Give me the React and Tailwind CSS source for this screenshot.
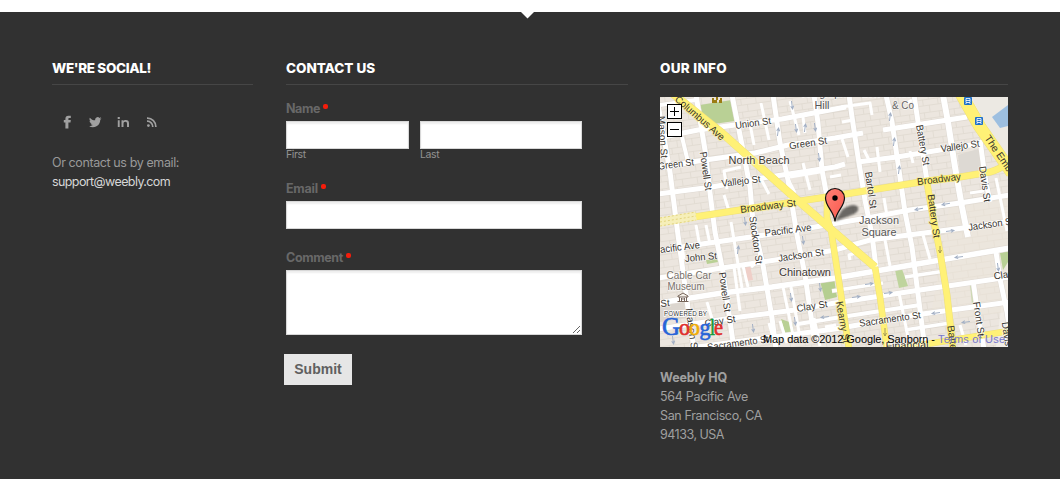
import React from "react";

const streets = [
  // east-west streets
  ["M-2 41 38 33 75 28 122 22 175 12 186 10", 5],
  ["M223 33 262 27 307 20", 5],
  ["M-2 71 38 64 95 56 128 48 175 41 203 36", 5],
  ["M-2 97 52 90 102 81 175 70 185 67", 5],
  ["M198 65 237 60 280 53 322 46", 5],
  ["M-2 154 28 149 105 138 155 130 207 121 250 113 300 106 350 98", 5],
  ["M-2 181 62 171 122 162 175 153 210 143 303 131 350 124", 5],
  ["M-2 206 62 196 112 190 175 181 257 167 350 151", 5.5],
  ["M-2 232 72 221 135 213 175 206 260 193 350 180", 5],
  ["M30 251 105 241 175 232 255 218 350 205", 5],
  ["M138 227 175 221 260 208", 4],
  ["M172 194 223 186", 3.5],
  ["M245 180 285 174", 3.5],
  ["M245 233 290 226", 3.5],
  ["M0 8 36 3", 4],
  // north-south streets
  ["M-2 8 3 35 10 75 18 138 28 211 34 252", 5],
  ["M22 40 28 65", 4],
  ["M36 -2 45 53 50 96 55 135 63 175 74 252", 5],
  ["M72 -2 83 53 90 90 93 125 103 168 112 221 116 252", 5],
  ["M113 -2 120 46 128 83 137 138 145 178 154 240", 5],
  ["M154 -2 158 26 162 73 167 100", 5],
  ["M189 -2 192 20 198 60 205 103 212 138 216 170", 5],
  ["M226 -2 232 25 240 80 245 115 252 150 265 252", 5],
  ["M254 -2 260 38 267 84", 5],
  ["M283 -2 288 25 295 70 302 110 308 140", 6],
  ["M320 43 325 80 330 105", 5],
  ["M313 183 318 218 324 252", 5],
  ["M336 155 340 182 347 215 350 237", 5],
  ["M310 96 324 94", 3],
];

const alleys = [
  "M90 27 94 48", "M101 6 109 43", "M130 4 139 38", "M143 20 145 36",
  "M64 98 69 114 M67 92 64 74 81 70", "M101 82 109 97",
  "M128 82 135 96", "M143 66 150 93", "M130 80 160 75", "M36 128 40 150 M46 128 50 147",
  "M71 125 82 191", "M74 170 80 214", "M83 169 88 190", "M91 170 98 164",
  "M123 190 133 238", "M131 190 139 235", "M109 226 115 247", "M120 224 127 246",
  "M47 205 53 225", "M22 149 24 162", "M181 10 210 6 212 18 M182 25 193 23",
  "M182 42 188 60", "M204 53 210 65 M217 50 220 75", "M250 54 253 66",
  "M224 101 227 119", "M225 143 230 169", "M263 138 270 162",
  "M239 196 248 240", "M190 163 189 158 196 156", "M170 80 181 78", "M247 6 252 3",
  "M154 221 160 249", "M165 230 176 228", "M300 228 306 248", "M320 20 324 36", "M336 81 347 134",
];

const arrows = [
  [132, 8, 82], [118, 35, -82], [136, 31, 82], [145, 31, -82], [155, 30, 82], [159, 60, 82],
  [230, 20, -82], [234, 45, -82], [239, 73, -82], [259, 112, 170], [286, 107, 170],
  [143, 143, 82], [78, 153, -82], [131, 200, 82], [160, 190, 82], [93, 231, 82], [135, 224, 82],
  [290, 134, -8], [299, 160, 172], [209, 187, -8], [196, 200, -8], [228, 196, -8],
  [276, 216, 172], [306, 225, 172], [225, 235, 82], [338, 170, 82], [85, 124, 82], [13, 243, 82], [165, 220, 172],
];

// text, centre x, centre y, rotation, width, on a yellow road
const labels = [
  ["Union St", 93, 26, -8, 36],
  ["Green St", 148, 46, -9, 38],
  ["Green St", 16, 67, -7, 36],
  ["Vallejo St", 81, 84, -7, 39],
  ["Vallejo St", 300, 49, -8, 39],
  ["Powell St", 46, 74, 82, 39],
  ["Mason St", 3, 40, 86, 42],
  ["Bartol St", 211, 93, 82, 37],
  ["Battery St", 263, 48, 80, 41],
  ["Davis St", 325, 87, 82, 36],
  ["Pacific Ave", 128, 133, -7, 47],
  ["acific Ave", 20, 150, -7, 40],
  ["John St", 41, 160, -5, 32],
  ["Jackson St", 141, 158, -8, 46],
  ["Jackson St", 331, 127, -8, 46],
  ["Stockton St", 96, 143, 82, 48],
  ["Powell St", 65, 195, 82, 40],
  ["Clay St", 152, 209, -9, 31],
  ["Clay St", 60, 224, -9, 31],
  ["Clay St", 349, 177, -8, 31],
  ["St", 5, 206, -5, 9],
  ["Mason St", 32, 233, 82, 44],
  ["Sacramento St", 230, 222, -8, 62],
  ["Sacramento St", 78, 246, -8, 62],
  ["Front St", 319, 222, 82, 35],
  ["Davis", 347, 237, 82, 24],
  ["Columbus Ave", 40, 21, 41, 62, true],
  ["Broadway St", 108, 109, -7, 56, true],
  ["Broadway", 279, 82, -7, 44, true],
  ["Battery St", 274, 119, 82, 44, true],
  ["Kearny St", 183, 225, 80, 42, true],
  ["Battery", 293, 245, 82, 34, true],
  ["The Embarcadero", 350, 73, 56, 82, true],
  ["Financial", 247, 248, -2, 43],
];

const places = [
  ["North Beach", 99, 67, 61, "#3e3833"],
  ["Chinatown", 145, 179, 52, "#3e3833"],
  ["Jackson", 219, 127, 40, "#555"],
  ["Square", 219, 139, 35, "#555"],
  ["Hill", 162, 12, 15, "#555"],
  ["Telegraph", 163, 0, 46, "#555"],
  ["Levi Strauss", 229, 0, 54, "#777"],
  ["& Co", 243, 12, 22, "#666"],
  ["Cable Car", 29, 182, 45, "#77706a"],
  ["Museum", 26, 193, 37, "#77706a"],
];

const avenues = [
  ["M34 120 173 99 267 84 300 80 330 75Q341 72 350 64", 6.5],
  ["M167 100 167 121 171 133 180 191 189 252", 6],
  ["M267 86 273 120 280 155 287 198 293 252", 6.3],
  ["M215 170 220 200 227 252M235 252 343 235 350 234", 6],
  ["M12 -4 62 36 135 101 173 134 215 170", 7.5],
  ["M300 -5 320 30 352 76", 12],
];

function CityMap() {
  return (
    <svg className="block h-[250px] w-[348px]" viewBox="0 0 348 250" fontFamily="'Liberation Sans', Arial, sans-serif">
      <defs>
        <pattern id="lots" width="15" height="13" patternUnits="userSpaceOnUse" patternTransform="rotate(-8)">
          <rect width="15" height="13" fill="#ece6df" />
          <path d="M0 .5H15M4.500 0V6M10.500 6V13M0 6.500H15" stroke="#e0d9d1" strokeWidth=".8" fill="none" />
        </pattern>
        <linearGradient id="pin" x1="0" y1="0" x2="1" y2="1">
          <stop offset="0" stopColor="#ff8175" />
          <stop offset="1" stopColor="#f9584d" />
        </linearGradient>
        <filter id="soft" x="-30%" y="-30%" width="160%" height="160%">
          <feGaussianBlur stdDeviation="1.3" />
        </filter>
      </defs>
      <rect width="348" height="250" fill="#f1ede7" />
      <path d="M0 0H300L348 70V158L336 250H0Z" fill="url(#lots)" />
      <path d="M290 105 348 96V215L270 225Z" fill="#ece6da" opacity=".55" />
      <path d="M298 58 318 52 327 75 300 79Z" fill="#ddd9d3" />
      <path d="M0 209 25 205 28 221 0 225Z" fill="#dcd6cf" />
      <path d="M311 0H348V68Z" fill="#ece9e3" />
      <path d="M332 20 348 8V29L340 31Z" fill="#9dbfe0" />
      <path d="M40 8 72 3 75 24 46 28Z" fill="#b9d095" />
      <path d="M46 163 57 162 58 165 47 167Z" fill="#b9d095" />
      <path d="M160 184 174 181 177 200 165 203Z" fill="#b5ce90" />
      <path d="M235 173 242 172 248 189 239 191Z" fill="#bfd49d" />
      <path d="M121 222 132 226 134 236 125 236Z" fill="#b9d095" />
      <path d="M340 156 348 154V165L343 173Z" fill="#b9d095" />
      <path d="M310 188 314 187 317 206 312 207Z" fill="#cbd9b0" />
      <path d="M85 170 90 168 93 183 87 184Z" fill="#efcfc8" />

      <g fill="none" stroke="#ded8d1" strokeLinejoin="round">
        {streets.map(([d, w], i) => <path key={i} d={d} strokeWidth={w + 1} />)}
      </g>
      <g fill="none" stroke="#fff" strokeLinejoin="round">
        {streets.map(([d, w], i) => <path key={i} d={d} strokeWidth={w} />)}
        {alleys.map((d, i) => <path key={i} d={d} strokeWidth="3" />)}
      </g>
      <g fill="none" stroke="#a3b0c5">
        {arrows.map(([x, y, r], i) => (
          <path key={i} transform={`translate(${x} ${y}) rotate(${r})`} d="M-4 0H3M1 -1.500 4 0 1 1.500" />
        ))}
      </g>

      <g fill="none" stroke="#eee07a" strokeLinejoin="round">
        {avenues.map(([d, w], i) => <path key={i} d={d} strokeWidth={w + 0.6} />)}
      </g>
      <g fill="none" stroke="#fff176" strokeLinejoin="round">
        {avenues.map(([d, w], i) => <path key={i} d={d} strokeWidth={w - 0.4} />)}
      </g>
      <path d="M0 125 36 119" stroke="#f6efb9" strokeWidth="9" />
      <path d="M0 121 36 115M0 125 36 119M0 129 36 123" stroke="#e3d47d" strokeDasharray="2 2" />
      <path d="M280 149V156M278.500 153 280 156 281.500 153M225 231V239M223.500 236 225 239 226.500 236" stroke="#a89c54" fill="none" />

      <path d="M52 6V1H54V3H56V0H58V3H60V1H62V6H59V3H57V6Z" fill="#9b7c13" />
      {[[304, 0], [315, 20]].map(([x, y]) => (
        <g key={x} transform={`translate(${x} ${y})`}>
          <rect width="8" height="8" rx="1" fill="#1e70c9" />
          <path d="M2 1.500H6V5.500H2ZM2 3.500H6M1.500 7 3 5.500M6.500 7 5 5.500" stroke="#fff" strokeWidth=".8" fill="none" />
        </g>
      ))}
      <g fill="none" stroke="#76655a">
        <path d="M18 199 23 196 28 199V200H18ZM19.500 200V204M26.500 200V204M17.500 204.500H28.500" fill="#f4efe8" />
        <path d="M21.500 204V201L23 202.500 24.500 201V204" />
      </g>

      <g textAnchor="middle" fill="#39352f" strokeWidth="1.700" strokeOpacity=".6" paintOrder="stroke" strokeLinejoin="round">
        {labels.map(([t, x, y, r, w, yellow], i) => (
          <text key={i} transform={`translate(${x} ${y}) rotate(${r})`} y="3.500" fontSize="10" textLength={w} lengthAdjust="spacingAndGlyphs"
            stroke={yellow ? "#fff176" : "#fff"}>{t}</text>
        ))}
        {places.map(([t, x, y, w, c], i) => (
          <text key={t} x={x} y={y} fontSize={i < 2 ? 11 : 10.5} textLength={w} lengthAdjust="spacingAndGlyphs" fill={c} stroke="#fff">{t}</text>
        ))}
      </g>

      <path d="M175 124 182 113Q193 105 198 110 200 116 189 119L176 124Z" fill="#000" opacity=".55" filter="url(#soft)" />
      <path d="M175 124.500C174 114 165.500 110 165.500 101A9.500 9.500 0 0 1 184.500 101C184.500 110 176 114 175 124.500Z" fill="url(#pin)" stroke="#111" strokeWidth="1.200" />
      <circle cx="175" cy="101" r="2.700" />

      {[7, 25].map((y) => (
        <g key={y}>
          <rect x="7.500" y={y + 0.5} width="14" height="14" fill="#fff" stroke="#000" />
          <path d={y === 7 ? "M10 14.500H19M14.500 10V19" : "M10 32.500H19"} stroke="#000" />
        </g>
      ))}

      <text x="4" y="219" fontSize="6.300" textLength="43" fill="#333" stroke="#fff" strokeWidth="1.500" paintOrder="stroke">POWERED BY</text>
      <g fontFamily="'Liberation Serif', serif" fontSize="24" strokeWidth=".7">
        {[["G", 2, "#2864d8", 18, 25], ["o", 19, "#df2f2e", 11], ["o", 29, "#efad0b", 11], ["g", 39.5, "#2864d8", 11], ["l", 50, "#179c38", 5], ["e", 54, "#df2f2e", 9]].map(([t, x, c, w, s]) => (
          <text key={x} x={x} y="238" fontSize={s || 24} textLength={w} lengthAdjust="spacingAndGlyphs" fill={c} stroke={c}>{t}</text>
        ))}
      </g>
      <text x="103" y="246" fontSize="11" textLength="172" fill="#000">Map data ©2012 Google, Sanborn -</text>
      <text x="278" y="246" fontSize="11" textLength="67" fill="#7777cc">Terms of Use</text>
    </svg>
  );
}

function Heading({ children, className }) {
  return (
    <h2 className={`h-[25px] border-b border-[#464646] text-[13.5px] leading-[17px] font-extrabold whitespace-nowrap text-white ${className}`}>
      {children}
    </h2>
  );
}

function Label({ children, className }) {
  return (
    <label className="flex h-[19px] items-center gap-[3px] text-[12.5px] leading-[19px] font-bold text-[#686868]">
      <span className={className}>{children}</span>
      <span className="mb-[4px] size-[5px] rounded-[2px] bg-[#f51d0b]" />
    </label>
  );
}

const field = "block rounded-none border border-[#d8d8d8] bg-white shadow-[inset_0_2px_2px_#eee] outline-none";

export default function App() {
  return (
    <div className="h-[479px] overflow-hidden bg-white pt-3 font-['Inter',sans-serif]">
      <footer className="relative flex h-[467px] bg-[#313131] pl-[52px] pt-12">
        <svg className="absolute left-[521px] top-0" width="13" height="7"><path d="M0 0H13L6.500 6.500Z" fill="#fff" /></svg>

        <section className="mr-[33px] w-[201px]">
          <Heading className="tracking-[-0.35px]">WE'RE SOCIAL!</Heading>
          <div className="mt-[29px] flex h-4 items-center text-[#a0a0a0]">
            <svg className="ml-[11px]" width="9" height="14" viewBox="0 0 9 14" fill="currentColor"><path d="M2.400 13.500V7.500H.8V5.100H2.400V3.700C2.400 1.700 3.400.7 5.400.7H7.800V3.100H6.300C5.600 3.100 5.400 3.400 5.400 4V5.100H7.800L7.500 7.500H5.400V13.500Z" /></svg>
            <svg className="ml-[17px]" width="12.500" height="12.500" viewBox="0 0 24 24" fill="currentColor"><path d="M23.950 4.570a10 10 0 0 1-2.820.775 4.960 4.960 0 0 0 2.160-2.723c-.95.555-2 .959-3.130 1.184a4.920 4.920 0 0 0-8.380 4.482C7.690 8.095 4.070 6.130 1.640 3.162a4.820 4.820 0 0 0-.67 2.475c0 1.710.87 3.213 2.190 4.096a4.900 4.900 0 0 1-2.230-.616v.06a4.920 4.920 0 0 0 3.950 4.827 5 5 0 0 1-2.210.085 4.940 4.940 0 0 0 4.600 3.419A9.870 9.870 0 0 1 0 19.540a13.990 13.990 0 0 0 7.550 2.209c9.050 0 14-7.496 14-13.985 0-.21 0-.42-.02-.63a9.940 9.940 0 0 0 2.420-2.564Z" /></svg>
            <svg className="ml-[15.500px]" width="13" height="14" viewBox="0 0 13 14" fill="currentColor"><path d="M.8 5.200H2.700V12H.8ZM.7 2H2.800V4H.7ZM4.500 5.200H6.400V6.100C6.900 5.300 7.600 5 8.800 5 11 5 12 6.200 12 8.200V12H10V8.700C10 7.500 9.600 6.700 8.400 6.700 7 6.700 6.500 7.500 6.500 8.700V12H4.500Z" /></svg>
            <svg className="ml-[16px]" width="13" height="14" viewBox="0 0 13 14" fill="none" stroke="currentColor" strokeWidth="1.700"><path d="M1 3.100A8.600 8.600 0 0 1 9.900 12M1 6.200A5.500 5.500 0 0 1 6.800 12" /><circle cx="2.400" cy="10.600" r="1.400" fill="currentColor" stroke="none" /></svg>
          </div>
          <p className="mt-[23px] text-[12.5px] leading-[19px] tracking-[-0.395px] whitespace-nowrap text-[#999]">Or contact us by email:</p>
          <a className="block text-[12.5px] leading-[19px] tracking-[-0.6px] text-[#d6d6d6]">support@weebly.com</a>
        </section>

        <section className="mr-[32px] w-[342px]">
          <Heading className="tracking-[-0.03px]">CONTACT US</Heading>
          <form className="flex w-[296px] flex-col pt-[14px]">
            <Label className="tracking-[-0.42px]">Name</Label>
            <div className="mt-[3px] flex gap-[11px]">
              <input className={`${field} h-7 w-[123px]`} />
              <input className={`${field} h-7 w-[162px]`} />
            </div>
            <div className="flex h-[11px] gap-[11px] text-[10.5px] leading-[11px] tracking-[-0.38px] text-[#929292]">
              <span className="w-[123px]">First</span>
              <span>Last</span>
            </div>
            <div className="mt-[19px]"><Label className="tracking-[-0.22px]">Email</Label></div>
            <input className={`${field} mt-[3px] h-7 w-full`} />
            <div className="mt-[19px]"><Label className="tracking-[-0.36px]">Comment</Label></div>
            <div className="mt-[3px] flex h-[65px]">
              <textarea className={`${field} h-[65px] w-full shrink-0 resize-none`} />
              <svg className="-ml-[10px] mt-[55px] shrink-0" width="9" height="9" stroke="#666"><path d="M1 8 8 1M5 8 8 5" /></svg>
            </div>
            <button type="button" className="-ml-0.5 mt-[19px] flex h-[31px] w-[68px] items-center justify-center bg-[#e6e6e6] font-['Liberation_Sans',sans-serif] text-[14px] font-bold text-[#606060]">
              Submit
            </button>
          </form>
        </section>

        <section className="w-[348px]">
          <Heading className="tracking-[0.29px]">OUR INFO</Heading>
          <div className="mt-3"><CityMap /></div>
          <address className="mt-[21px] text-[12.5px] leading-[19px] whitespace-nowrap text-[#a0a0a0] not-italic">
            <strong className="block tracking-[-0.13px]">Weebly HQ</strong>
            <span className="block tracking-[-0.29px]">564 Pacific Ave</span>
            <span className="block tracking-[-0.36px]">San Francisco, CA</span>
            <span className="block tracking-[-0.49px]">94133, USA</span>
          </address>
        </section>
      </footer>
    </div>
  );
}
